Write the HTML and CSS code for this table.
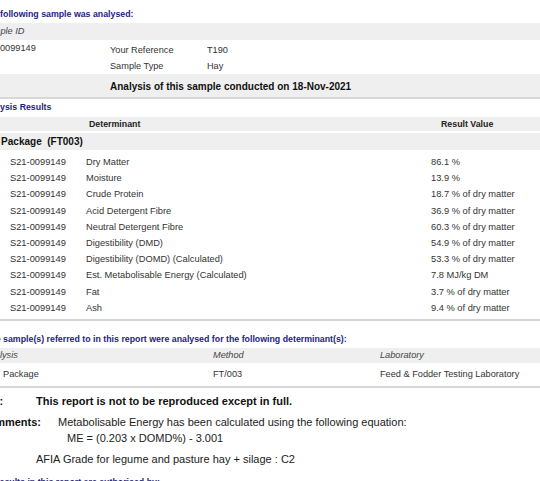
FILE: index.html
```html
<!DOCTYPE html>
<html>
<head>
<meta charset="utf-8">
<link rel="stylesheet" href="styles.css">
</head>
<body>
<div class="page">
  <div class="heading h-first">The following sample was analysed:</div>
  <div class="band band-id"><span class="ital">Sample ID</span></div>
  <div class="info">
    <div class="info-id">S21-0099149</div>
    <div class="info-key">Your Reference</div>
    <div class="info-val">T190</div>
    <div class="info-id"></div>
    <div class="info-key">Sample Type</div>
    <div class="info-val">Hay</div>
  </div>
  <div class="band band-date">Analysis of this sample conducted on 18-Nov-2021</div>

  <div class="heading h-results">Analysis Results</div>
  <div class="band band-head">
    <div class="res-grid">
      <div></div>
      <div class="th-det">Determinant</div>
      <div class="th-val">Result Value</div>
    </div>
  </div>
  <div class="band band-pkg">Hay Package&nbsp;&nbsp;(FT003)</div>
  <div class="results res-grid">
    <div>S21-0099149</div><div>Dry Matter</div><div>86.1 %</div>
    <div>S21-0099149</div><div>Moisture</div><div>13.9 %</div>
    <div>S21-0099149</div><div>Crude Protein</div><div>18.7 % of dry matter</div>
    <div>S21-0099149</div><div>Acid Detergent Fibre</div><div>36.9 % of dry matter</div>
    <div>S21-0099149</div><div>Neutral Detergent Fibre</div><div>60.3 % of dry matter</div>
    <div>S21-0099149</div><div>Digestibility (DMD)</div><div>54.9 % of dry matter</div>
    <div>S21-0099149</div><div>Digestibility (DOMD) (Calculated)</div><div>53.3 % of dry matter</div>
    <div>S21-0099149</div><div>Est. Metabolisable Energy (Calculated)</div><div>7.8 MJ/kg DM</div>
    <div>S21-0099149</div><div>Fat</div><div>3.7 % of dry matter</div>
    <div>S21-0099149</div><div>Ash</div><div>9.4 % of dry matter</div>
  </div>

  <div class="heading h-methods">The sample(s) referred to in this report were analysed for the following determinant(s):</div>
  <div class="band band-mhead meth-grid">
    <div class="ital">Analysis</div>
    <div class="ital">Method</div>
    <div class="ital">Laboratory</div>
  </div>
  <div class="meth-row">
    <div>Package</div>
    <div>FT/003</div>
    <div>Feed &amp; Fodder Testing Laboratory</div>
  </div>

  <div class="note">
    <div class="note-label">Note:</div>
    <div class="note-text">This report is not to be reproduced except in full.</div>
  </div>
  <div class="comments">
    <div class="note-label">Comments:</div>
    <div class="comment-text">Metabolisable Energy has been calculated using the following equation:</div>
  </div>
  <div class="formula">ME = (0.203 x DOMD%) - 3.001</div>
  <div class="grade">AFIA Grade for legume and pasture hay + silage : C2</div>
  <div class="heading h-auth">The results in this report are authorised by:</div>
</div>
</body>
</html>
```

FILE: styles.css
```css
html, body {
  margin: 0;
  padding: 0;
  background: #ffffff;
  overflow: hidden;
}

body {
  font-family: "Liberation Sans", Arial, sans-serif;
  color: #333333;
  width: 540px;
  height: 481px;
}

.page {
  margin-left: -25px;
  width: 565px;
}

.heading {
  color: #1e1e86;
  font-weight: bold;
  font-size: 8.8px;
  line-height: 16px;
  white-space: nowrap;
}

.h-first {
  padding-top: 6px;
  padding-left: 7px;
}

.band {
  background: #efefef;
  white-space: nowrap;
}

.ital {
  font-style: italic;
}

.band-id {
  margin-top: 1px;
  height: 17px;
  line-height: 17px;
  font-size: 9.2px;
  padding-left: 6.5px;
  color: #444;
}

.info {
  display: grid;
  grid-template-columns: 129.4px 97px 1fr;
  padding: 2px 0 0 5.6px;
  font-size: 9.2px;
  line-height: 16px;
}

.info-id {
  margin-top: -2px;
}

.band-date {
  height: 21px;
  padding-top: 2px;
  line-height: 21px;
  font-size: 10px;
  font-weight: bold;
  color: #111;
  padding-left: 135px;
  border-bottom: 2px solid #d8d8d8;
}

.h-results {
  padding-left: 6px;
  padding-bottom: 2px;
}

.res-grid {
  display: grid;
  grid-template-columns: 76px 345px 1fr;
  padding-left: 35px;
}

.band-head {
  height: 14px;
  line-height: 14px;
  font-size: 8.8px;
  font-weight: bold;
  color: #222;
}

.th-det {
  padding-left: 3px;
}

.th-val {
  padding-left: 10px;
}

.band-pkg {
  margin-top: 2px;
  height: 17px;
  line-height: 17px;
  font-size: 10px;
  font-weight: bold;
  color: #111;
  padding-left: 5px;
}

.results {
  padding-top: 4px;
  padding-bottom: 3px;
  font-size: 9.3px;
  line-height: 16.2px;
  white-space: nowrap;
  border-bottom: 2px solid #d4d4d4;
}

.h-methods {
  padding-top: 10px;
  padding-left: 10px;
  padding-bottom: 1px;
}

.meth-grid {
  display: grid;
  grid-template-columns: 229.4px 167px 1fr;
  padding-left: 8.6px;
  font-size: 9.2px;
  white-space: nowrap;
}

.band-mhead {
  height: 15px;
  line-height: 15px;
  color: #444;
}

.meth-row {
  display: grid;
  grid-template-columns: 210px 167px 1fr;
  padding: 2px 0 3px 28px;
  font-size: 9.2px;
  line-height: 18px;
  white-space: nowrap;
  border-bottom: 2px solid #d8d8d8;
}

.note, .comments {
  display: flex;
  font-size: 11px;
  line-height: 16px;
  white-space: nowrap;
  color: #111;
}

.note {
  padding-top: 5px;
}

.comments {
  padding-top: 5px;
}

.note-label {
  font-weight: bold;
  box-sizing: border-box;
}

.note .note-label {
  width: 61px;
}

.comments .note-label {
  width: 83px;
  padding-left: 5.5px;
}

.note-text {
  font-weight: bold;
}

.comment-text {
  color: #222;
}

.formula {
  font-size: 11px;
  line-height: 16px;
  padding-left: 92px;
  color: #222;
}

.grade {
  font-size: 11px;
  line-height: 16px;
  padding-top: 5px;
  padding-left: 61px;
  color: #222;
  white-space: nowrap;
}

.h-auth {
  padding-top: 7px;
  padding-left: 3px;
}
```
